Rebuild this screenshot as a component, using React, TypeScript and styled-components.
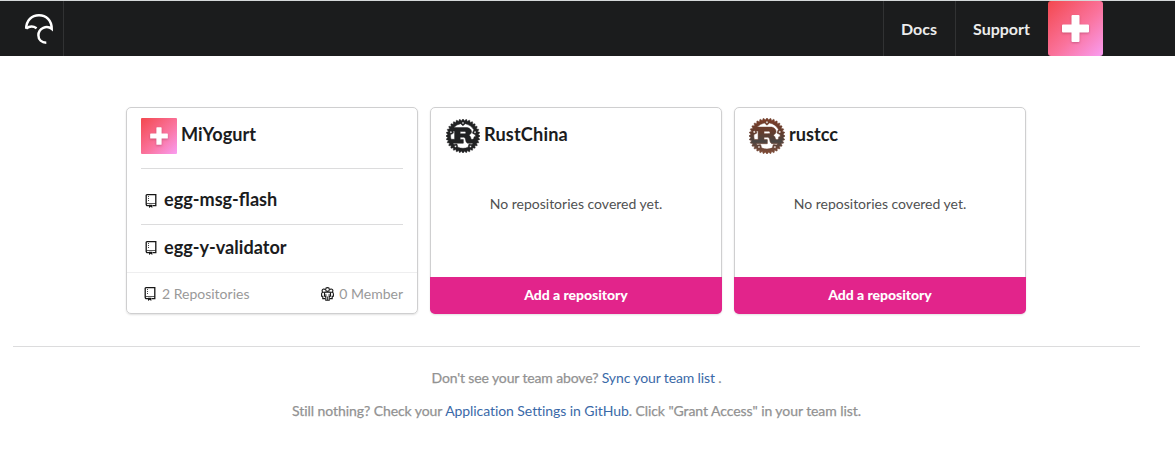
import React from "react";
import styled, { createGlobalStyle } from "styled-components";
import { SiRust } from "react-icons/si";

const GlobalStyle = createGlobalStyle`
  * { box-sizing: border-box; }
  body { margin: 0; background: #fff; color: #1b1c1d; font: 14px/20px Lato, "Liberation Sans", sans-serif; }
  svg { display: block; flex: none; }
`;

const Header = styled.header`
  display: flex;
  height: 56px;
  border-top: 1px solid #d5d8d9;
  background: #1b1c1d;
`;
const Brand = styled.a`
  width: 64px;
  padding: 12px 0 0 24px;
  border-right: 1px solid #313233;
`;
const Nav = styled.nav`
  display: flex;
  margin-left: auto;
  margin-right: 72px;
`;
const NavItem = styled.a<{ $width: number }>`
  width: ${(p) => p.$width}px;
  padding: 17px 0 0 17px;
  border-left: 1px solid #313233;
  color: #ececec;
  font-size: 16px;
  font-weight: 700;
  line-height: 22px;
  white-space: nowrap;
`;
const Teams = styled.main`
  display: flex;
  gap: 12px;
  margin: 51px 0 0 126px;
`;
const Card = styled.section`
  display: flex;
  flex-direction: column;
  width: 292px;
  height: 207px;
  border: 1px solid #cfcfd0;
  border-radius: 5px;
  box-shadow: 0 1px 2px rgba(0, 0, 0, 0.12);
`;
const TeamHeader = styled.div<{ $inset?: number }>`
  display: flex;
  align-items: center;
  gap: 4px;
  height: 56px;
  padding-left: ${(p) => p.$inset ?? 14}px;
`;
const TeamName = styled.h2<{ $tracking?: number }>`
  margin: -4px 0 0;
  font-size: 18.15px;
  line-height: 24px;
  font-weight: 700;
  letter-spacing: ${(p) => p.$tracking ?? 0}px;
`;
const RepoList = styled.div`
  margin: 4px 14px 0;
  border-top: 1px solid #dcdcdd;
  padding-top: 7px;
`;
const Repo = styled.a`
  display: flex;
  align-items: center;
  gap: 7px;
  height: 48px;
  padding: 0 0 2px 4px;
  font-size: 18.1px;
  font-weight: 700;
  svg { margin-top: 3px; }
  & + & { padding-bottom: 4px; border-top: 1px solid #dcdcdd; }
`;
const CardFooter = styled.footer`
  display: flex;
  align-items: center;
  justify-content: space-between;
  margin-top: auto;
  height: 41px;
  padding: 2px 14px 0 17px;
  border-top: 1px solid #eeeeef;
  color: #999;
`;
const Stat = styled.span<{ $gap: number }>`
  display: flex;
  align-items: center;
  gap: ${(p) => p.$gap}px;
`;
const Empty = styled.p`
  margin: 30px 0 0;
  text-align: center;
  color: #505152;
`;
const AddButton = styled.a`
  display: block;
  height: 37px;
  margin: auto -1px -1px;
  border-radius: 0 0 5px 5px;
  background: #e2248b;
  color: #fff;
  font-weight: 900;
  letter-spacing: -0.03px;
  line-height: 35px;
  text-align: center;
`;
const Help = styled.aside`
  margin: 32px 35px 0 13px;
  padding-top: 21px;
  border-top: 1px solid #dcdcdd;
  color: #929292;
  text-align: center;
`;
const HelpLine = styled.p<{ $tracking: number }>`
  margin: 0 0 13px;
  font-weight: 400;
  letter-spacing: ${(p) => p.$tracking}px;
  -webkit-text-stroke: 0.25px currentColor;
`;
const Link = styled.a`
  color: #3a69a8;
  -webkit-text-stroke-width: 0;
`;
const AvatarBox = styled.span<{ $size: number }>`
  display: block;
  width: ${(p) => p.$size}px;
  height: ${(p) => p.$size}px;
  border-radius: ${(p) => (p.$size > 40 ? 3 : 1)}px;
  background: linear-gradient(135deg, #f3484e, #fa739d 55%, #f99df2);
  svg { filter: drop-shadow(0 1px 1px rgba(120, 30, 60, 0.35)); }
`;

const Avatar = ({ size }: { size: number }) => (
  <AvatarBox $size={size}>
    <svg width={size} height={size} viewBox="0 0 55 55">
      <path
        d="M24.500 14h6q1 0 1 1v8.500h8.500q1 0 1 1v6q0 1-1 1h-8.500v8.500q0 1-1 1h-6q-1 0-1-1v-8.500h-8.500q-1 0-1-1v-6q0-1 1-1h8.500v-8.500q0-1 1-1z"
        fill="#fff"
      />
    </svg>
  </AvatarBox>
);

const Umbrella = () => (
  <svg width="30" height="32" viewBox="0 0 30 32" fill="none" stroke="#fff" strokeWidth="2.500">
    <path d="M2.200 15.800C2.200 7.500 7.700 2.200 15 2.200S27.700 7.500 27.700 15.800C23 11.900 14.400 14.800 14.400 22.300C14.400 26.800 17.800 29.700 22.300 29.700" />
    <path d="M2.200 15.600C5.300 13.200 9.500 13.200 12.600 15.300" />
  </svg>
);

const BookIcon = () => (
  <svg width="12" height="14" viewBox="0 0 12 14" fill="none" stroke="#161616">
    <path d="M1.300 .600h9.500v11H7.500M4 11.600H2.500Q1.200 11.600 1.200 10.300V.700" strokeWidth="1.300" />
    <path d="M1.500 9.500h9.300" strokeWidth=".7" />
    <path d="M3.500 2v6" strokeWidth=".8" strokeDasharray="1 1" />
    <path d="M4 10.700h3.300V14L5.700 12.700 4 14z" fill="#161616" stroke="none" />
  </svg>
);

const PeopleIcon = () => (
  <svg width="13" height="14" viewBox="0 0 13 14" fill="#fff" stroke="#161616" strokeWidth="1.100">
    <path d="M1.900 5.200a1.700 1.700 0 1 1 2.300-2.400M11.100 5.200a1.700 1.700 0 1 0-2.300-2.400" />
    <path d="M4.300 5.300H2Q.600 5.300 .600 7v2.300h1.200v2.300h2.500M8.700 5.300H11q1.400 0 1.400 1.700v2.300h-1.200v2.300H8.700" />
    <circle cx="6.500" cy="2.500" r="1.900" />
    <path d="M4.500 5.100h4q1 0 1 1.200v2.900H8.200v4.100H4.800V9.200H3.500V6.300q0-1.200 1-1.200z" />
    <path d="M4.900 6.900v2.500M8.100 6.900v2.500M6.500 9.500v3.500" strokeWidth=".8" />
  </svg>
);

const RustLogo = ({ brown = false }: { brown?: boolean }) => (
  <svg width={brown ? 36 : 34} height={brown ? 36 : 34} viewBox="0 0 36 36">
    <defs>
      <linearGradient id="rust-brown" x1="0" y1="0" x2="0" y2="1">
        <stop offset="0" stopColor="#7d3d27" />
        <stop offset=".4" stopColor="#633d2e" />
        <stop offset=".65" stopColor="#4a4542" />
        <stop offset="1" stopColor="#884b33" />
      </linearGradient>
    </defs>
    <SiRust
      size={36}
      style={{ fill: brown ? "url(#rust-brown)" : "#202122" }}
      stroke={brown ? "#6b3f2e" : "#202122"}
      strokeWidth={0.35}
    />
  </svg>
);

export default function App() {
  return (
    <>
      <GlobalStyle />
      <Header>
        <Brand><Umbrella /></Brand>
        <Nav>
          <NavItem $width={72}>Docs</NavItem>
          <NavItem $width={93}>Support</NavItem>
          <Avatar size={55} />
        </Nav>
      </Header>
      <Teams>
        <Card>
          <TeamHeader>
            <Avatar size={36} />
            <TeamName>MiYogurt</TeamName>
          </TeamHeader>
          <RepoList>
            <Repo><BookIcon />egg-msg-flash</Repo>
            <Repo><BookIcon />egg-y-validator</Repo>
          </RepoList>
          <CardFooter>
            <Stat $gap={6}><BookIcon />2 Repositories</Stat>
            <Stat $gap={5}><PeopleIcon />0 Member</Stat>
          </CardFooter>
        </Card>
        <Card>
          <TeamHeader $inset={15}>
            <RustLogo />
            <TeamName $tracking={0.15}>RustChina</TeamName>
          </TeamHeader>
          <Empty>No repositories covered yet.</Empty>
          <AddButton>Add a repository</AddButton>
        </Card>
        <Card>
          <TeamHeader>
            <RustLogo brown />
            <TeamName>rustcc</TeamName>
          </TeamHeader>
          <Empty>No repositories covered yet.</Empty>
          <AddButton>Add a repository</AddButton>
        </Card>
      </Teams>
      <Help>
        <HelpLine $tracking={-0.13}>Don't see your team above? <Link>Sync your team list</Link> .</HelpLine>
        <HelpLine $tracking={-0.07}>
          Still nothing? Check your <Link>Application Settings in GitHub</Link>. Click "Grant Access" in your team list.
        </HelpLine>
      </Help>
    </>
  );
}
